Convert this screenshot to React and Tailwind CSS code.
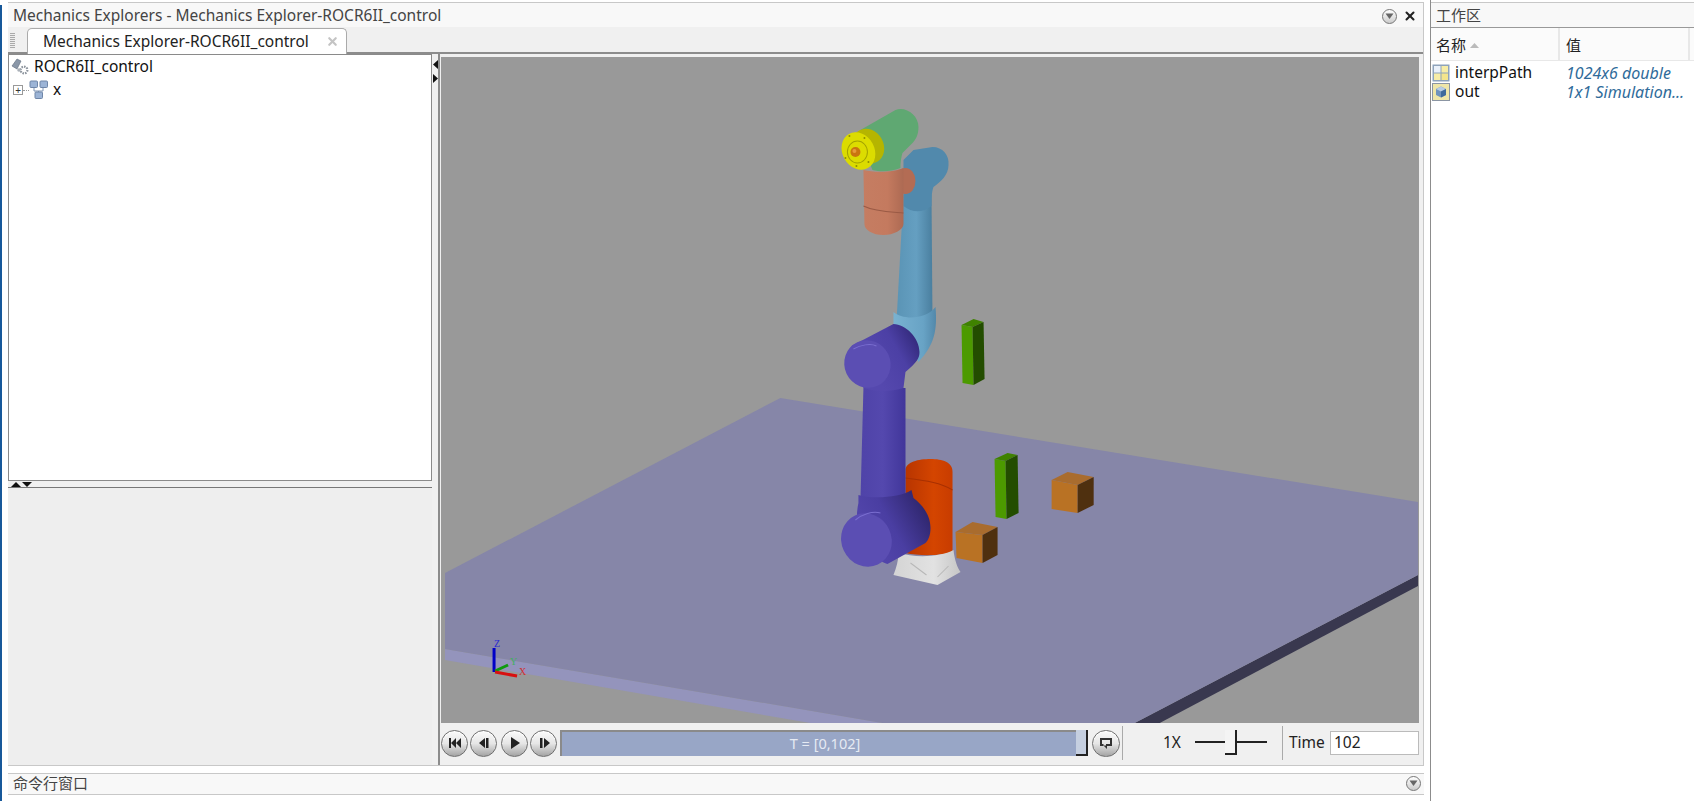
import React from 'react';
import { X } from 'lucide-react';

const uiFont = "font-['Noto_Sans','Noto_Sans_CJK_SC',sans-serif]";

// little round drop-down button used in the panel title bars
const PanelMenu = () => (
    <span className="flex h-[15px] w-[15px] items-center justify-center rounded-full border border-[#777] bg-linear-to-b from-white to-[#ccc]">
        <svg width="9" height="7" viewBox="0 0 9 7"><path d="M0.5 0.5h8L4.5 6z" fill="#666" /></svg>
    </span>
);

const RoundButton = ({ children, className = '' }) => (
    <button className={`flex h-[27px] shrink-0 items-center justify-center rounded-full border border-[#6f6f6f] bg-linear-to-b from-[#fbfbfb] via-[#e6e6e6] to-[#a4a4a4] shadow-[inset_0_1px_1px_white] ${className}`}>
        {children}
    </button>
);

const Poly = ({ d, fill }) => <polygon points={d} fill={fill} />;

const Box = ({ front, top, right, colors }) => (
    <g>
        <Poly d={front} fill={colors[0]} />
        <Poly d={top} fill={colors[1]} />
        <Poly d={right} fill={colors[2]} />
    </g>
);

const greenBar = ['#4c9a00', '#3f8200', '#234d00'];
const orangeBox = ['#b97224', '#a96c2e', '#4f300f'];

const Scene = () => (
    <svg className="block h-full w-full" viewBox="441 57 977 666" preserveAspectRatio="none">
        <defs>
            <linearGradient id="purpleTube" x1="0" x2="1" y1="0" y2="0">
                <stop offset="0" stopColor="#4f43a8" />
                <stop offset="0.5" stopColor="#5448ae" />
                <stop offset="1" stopColor="#41369a" />
            </linearGradient>
            <linearGradient id="purpleBody" gradientUnits="userSpaceOnUse" x1="860" x2="925" y1="545" y2="510">
                <stop offset="0" stopColor="#5548ae" />
                <stop offset="0.5" stopColor="#4a3ea2" />
                <stop offset="1" stopColor="#30276f" />
            </linearGradient>
            <linearGradient id="purpleUpper" gradientUnits="userSpaceOnUse" x1="870" x2="915" y1="365" y2="340">
                <stop offset="0" stopColor="#5548ae" />
                <stop offset="0.6" stopColor="#4c40a5" />
                <stop offset="1" stopColor="#362c80" />
            </linearGradient>
            <linearGradient id="blueTube" x1="0" x2="1" y1="0" y2="0">
                <stop offset="0" stopColor="#5a94b5" />
                <stop offset="0.55" stopColor="#659fc1" />
                <stop offset="1" stopColor="#4a7f9f" />
            </linearGradient>
            <linearGradient id="orangeBase" x1="0" x2="1" y1="0" y2="0">
                <stop offset="0" stopColor="#b83500" />
                <stop offset="0.6" stopColor="#d44500" />
                <stop offset="1" stopColor="#c83c00" />
            </linearGradient>
            <linearGradient id="salmon" x1="0" x2="1" y1="0" y2="0">
                <stop offset="0" stopColor="#c57d62" />
                <stop offset="0.6" stopColor="#c47a5f" />
                <stop offset="1" stopColor="#ad6a53" />
            </linearGradient>
            <linearGradient id="elbow" x1="0" x2="1" y1="0" y2="0">
                <stop offset="0" stopColor="#79b2d1" />
                <stop offset="0.7" stopColor="#68a3c5" />
                <stop offset="1" stopColor="#5288aa" />
            </linearGradient>
            <linearGradient id="whiteBase" x1="0" x2="1" y1="0" y2="0">
                <stop offset="0" stopColor="#d4d4d4" />
                <stop offset="0.6" stopColor="#e2e2e2" />
                <stop offset="1" stopColor="#c6c6c6" />
            </linearGradient>
        </defs>

        {/* floor plate */}
        <Poly d="445,649 882,723 810,723 445,660" fill="#9494bc" />
        <Poly d="1417,575 1417,586 1159,723 1134,723" fill="#39384f" />
        <Poly d="445,573 780,398 1417,502 1417,575 1134,723 882,723 445,649" fill="#8686a8" />

        {/* obstacles */}
        <Box front="961,325 972,327 973,385 962,383" top="961,325 973,319 983,322 972,327" right="972,327 983,322 984,379 973,385" colors={greenBar} />
        <Box front="994,459 1005,461 1006,519 995,517" top="994,459 1007,453 1017,455 1005,461" right="1005,461 1017,455 1018,513 1006,519" colors={greenBar} />
        <Box front="1051,480 1077,485 1077,513 1051,509" top="1051,480 1067,472 1093,477 1077,485" right="1077,485 1093,477 1093,505 1077,513" colors={orangeBox} />

        {/* base */}
        <path d="M905 553V470C905 462 918 459 930 459C942 459 952 462 952 472V552C940 556 918 556 905 553Z" fill="url(#orangeBase)" />
        <path d="M905 478C920 480 940 482 952 490" stroke="#a83000" fill="none" />
        <path d="M898 553C915 558 940 557 953 550C954 560 957 568 960 572L937 585L893 575C896 568 898 560 898 553Z" fill="url(#whiteBase)" />
        <path d="M910 563L926 575M948 566L937 577" stroke="#b8b8b8" fill="none" />
        <Box front="955,532 982,535 982,563 956,558" top="955,532 972,522 997,527 982,535" right="982,535 997,527 997,555 982,563" colors={orangeBox} />

        {/* lower purple tube and joint */}
        <path d="M863 388H905V502H860Z" fill="url(#purpleTube)" />
        <path d="M858 495C870 499 900 498 911 490L913 498C922 505 930 515 930 528C930 535 928 540 925 543L887 564C875 560 850 540 858 503Z" fill="url(#purpleBody)" />
        <ellipse cx="866" cy="540" rx="25" ry="27" transform="rotate(-25 866 540)" fill="#5b4eb3" />
        <path d="M855 520C862 514 872 511 880 513" stroke="#7a6ed0" fill="none" />

        {/* blue tube */}
        <path d="M903 195H931L932 322H896Z" fill="url(#blueTube)" />
        <path d="M893 312C902 320 925 320 935 307C937 330 934 345 918 362L903 335L893 325Z" fill="url(#elbow)" />

        {/* upper purple joint */}
        <path d="M851 346L893 324C905 324 919 338 919 352C919 358 917 362 905 372L903 388C890 392 875 392 863 388Z" fill="url(#purpleUpper)" />
        <ellipse cx="867" cy="364" rx="23" ry="24" transform="rotate(-25 867 364)" fill="#5b4eb3" />
        <path d="M853 349C860 345 870 343 876 346" stroke="#7a6ed0" fill="none" />

        {/* blue elbow */}
        <path d="M903 160L913 150L932 147C942 147 949 155 948 165C948 175 940 182 933 187C931 192 931 200 931 206C922 213 912 213 903 206Z" fill="#5189ac" />

        {/* salmon link */}
        <ellipse cx="905" cy="181" rx="10" ry="13" fill="#b36c54" />
        <path d="M863 170C875 173 895 172 903 168V224C903 230 893 235 883 235C872 235 864 230 864 224Z" fill="url(#salmon)" />
        <path d="M863 206C875 212 892 212 903 213" stroke="#9a5a45" fill="none" />

        {/* green wrist and yellow flange */}
        <path d="M860 130L895 110C905 106 918 115 918 127C918 134 916 139 912 143L902 153C900 160 900 165 900 168C890 172 880 172 872 170L868 160Z" fill="#5fa872" />
        <path d="M858 151L868 146" stroke="#b5b500" strokeWidth="35" />
        <ellipse cx="868" cy="146" rx="15" ry="18" transform="rotate(-29 868 146)" fill="#b5b500" />
        <ellipse cx="858" cy="151" rx="16" ry="19.5" transform="rotate(-29 858 151)" fill="#dcdc00" />
        <ellipse cx="857" cy="152" rx="10" ry="11" fill="none" stroke="#a3a300" />
        <g fill="#8e8e00">
            <circle cx="849" cy="136" r="1" />
            <circle cx="864" cy="138" r="1" />
            <circle cx="845" cy="158" r="1" />
            <circle cx="868" cy="162" r="1" />
            <circle cx="856" cy="166" r="1" />
        </g>
        <circle cx="855" cy="152" r="5" fill="#c9750f" />
        <circle cx="854" cy="151" r="2" fill="#e79a3a" />

        {/* axes triad */}
        <path d="M494 672V648" stroke="#0000c8" strokeWidth="3" />
        <path d="M495 671L508 665" stroke="#0f9a0f" strokeWidth="3" />
        <path d="M495 672L517 676" stroke="#d81010" strokeWidth="3" />
        <text x="494" y="647" fontSize="10" fill="#2a2ad0" fontFamily="Liberation Serif, serif">Z</text>
        <text x="510" y="665" fontSize="10" fill="#40b060" fontFamily="Liberation Serif, serif">Y</text>
        <text x="519" y="675" fontSize="10" fill="#d03030" fontFamily="Liberation Serif, serif">X</text>
    </svg>
);

const TreeIcons = {
    model: (
        <svg width="22" height="18" viewBox="0 0 22 18">
            <path d="M2 8L7 1L11 3L7 11Z" fill="#8a97a8" stroke="#5d6a7a" strokeWidth="0.6" />
            <circle cx="14" cy="12" r="3.4" fill="none" stroke="#8f969f" strokeWidth="2.2" strokeDasharray="1.6 1" />
            <circle cx="9" cy="12" r="1.8" fill="#aab0b8" />
        </svg>
    ),
    blocks: (
        <svg width="20" height="20" viewBox="0 0 20 20">
            <path d="M5 7V11H14V7M9.5 11V13" stroke="#7d93b3" fill="none" />
            <rect x="1" y="1" width="7.5" height="6.5" rx="1" fill="#9cb4d6" stroke="#6f86a8" />
            <rect x="11" y="1" width="7.5" height="6.5" rx="1" fill="#9cb4d6" stroke="#6f86a8" />
            <rect x="6" y="12" width="7.5" height="6.5" rx="1" fill="#9cb4d6" stroke="#6f86a8" />
        </svg>
    ),
};

const VarIconGrid = () => (
    <svg width="18" height="18" viewBox="0 0 18 18" className="shrink-0">
        <rect x="0.5" y="0.5" width="17" height="17" fill="#8ea3bb" />
        <rect x="2" y="2" width="6.5" height="6.5" fill="#eaf1fa" />
        <rect x="9.5" y="2" width="6.5" height="6.5" fill="#f7eda6" />
        <rect x="2" y="9.5" width="6.5" height="6.5" fill="#f7eda6" />
        <rect x="9.5" y="9.5" width="6.5" height="6.5" fill="#f4e58c" />
    </svg>
);

const VarIconCube = () => (
    <svg width="18" height="18" viewBox="0 0 18 18" className="shrink-0">
        <rect x="0.5" y="0.5" width="17" height="17" fill="#efe6a8" stroke="#8b95a3" />
        <path d="M9 3.5L14 6V12L9 14.5L4 12V6Z" fill="#6f93bd" />
        <path d="M9 3.5L14 6L9 8.5L4 6Z" fill="#b9cde3" />
        <path d="M9 8.5L14 6V12L9 14.5Z" fill="#3f6a9c" />
    </svg>
);

const Glyph = ({ d }) => (
    <svg width="14" height="12" viewBox="0 0 14 12"><path d={d} fill="#222" /></svg>
);

const WorkspaceRow = ({ icon, name, value }) => (
    <div className="flex h-[19px] items-center leading-none">
        <div className="flex w-[135px] items-center gap-[5px] pl-[1px] text-[15.5px] text-[#111]">
            {icon}
            <span>{name}</span>
        </div>
        <span className="text-[16px] text-[#2f6b9a] italic">{value}</span>
    </div>
);

export default function App() {
    return (
        <div className={`flex h-screen w-screen overflow-hidden bg-white ${uiFont}`}>
            <div className="mt-[5px] w-[2px] shrink-0 bg-[#17589a]" />

            {/* main column */}
            <div className="ml-[6px] flex w-[1416px] shrink-0 flex-col pt-[2px]">
                <div className="flex flex-1 flex-col border-t border-r border-b border-[#c8c8c8] bg-[#f0f0f0]">
                    {/* title bar */}
                    <div className="flex h-[24px] items-center justify-between bg-[#f8f8f8] pt-[2px] pr-[6px] pl-[5px] text-[15.5px] text-[#444]">
                        <span>Mechanics Explorers - Mechanics Explorer-ROCR6II_control</span>
                        <div className="flex items-center gap-[6px]">
                            <PanelMenu />
                            <X size={14} strokeWidth={3.5} color="#222" />
                        </div>
                    </div>

                    {/* tab strip */}
                    <div className="flex h-[27px] items-end border-b-[2px] border-[#8c8c8c] pl-[2px]">
                        <div className="mr-[12px] mb-[4px] h-[15px] w-[5px] bg-[repeating-linear-gradient(0deg,#aaa_0,#aaa_1px,#eee_1px,#eee_2px)]" />
                        <div className="-mb-[2px] flex h-[26px] w-[320px] items-center justify-between rounded-t-[5px] border border-b-0 border-[#aaa] bg-white pr-[7px] pl-[15px] text-[15.5px] text-[#222]">
                            <span>Mechanics Explorer-ROCR6II_control</span>
                            <X size={13} strokeWidth={4} color="#c4c4c4" />
                        </div>
                    </div>

                    {/* body */}
                    <div className="flex flex-1">
                        <div className="flex w-[424px] shrink-0 flex-col">
                            <div className="h-[427px] border border-[#8a8a8a] bg-white text-[15.5px] text-[#111]">
                                <div className="flex h-[24px] items-center gap-[2px] pl-[1px]">
                                    {TreeIcons.model}
                                    <span>ROCR6II_control</span>
                                </div>
                                <div className="flex h-[22px] items-center pl-[4px]">
                                    <span className="flex h-[10px] w-[10px] items-center justify-center border border-[#999] text-[10px] leading-none text-[#333]">+</span>
                                    <span className="w-[6px] border-t border-dotted border-[#999]" />
                                    {TreeIcons.blocks}
                                    <span className="ml-[4px]">x</span>
                                </div>
                            </div>
                            <div className="flex h-[6px] items-center gap-[1px] pl-[3px]">
                                <svg width="10" height="5" viewBox="0 0 10 5"><path d="M5 0L10 5H0Z" fill="#111" /></svg>
                                <svg width="10" height="5" viewBox="0 0 10 5"><path d="M0 0H10L5 5Z" fill="#111" /></svg>
                            </div>
                            <div className="flex-1 border-t border-[#777] bg-[#eeeeee]" />
                        </div>

                        {/* splitter */}
                        <div className="flex w-[6px] shrink-0 flex-col items-center gap-[5px] pt-[6px]">
                            <svg width="5" height="9" viewBox="0 0 5 9"><path d="M5 0V9L0 4.5Z" fill="#111" /></svg>
                            <svg width="5" height="9" viewBox="0 0 5 9"><path d="M0 0V9L5 4.5Z" fill="#111" /></svg>
                        </div>

                        {/* viewer */}
                        <div className="flex flex-1 flex-col border-l-[2px] border-[#8c8c8c] pr-[5px] pl-[1px]">
                            <div className="mt-[3px] h-[666px] bg-[#999999]">
                                <Scene />
                            </div>
                            <div className="flex h-[38px] items-center pt-[2px] text-[15.5px]">
                                <RoundButton className="w-[27px]"><Glyph d="M1 1h2v10H1zM8 1v10L3 6zM13 1v10L8 6z" /></RoundButton>
                                <RoundButton className="ml-[2px] w-[27px]"><Glyph d="M8 1v10L2 6zM9 1h2.5v10H9z" /></RoundButton>
                                <RoundButton className="ml-[4px] w-[27px]"><Glyph d="M3 0v12l9-6z" /></RoundButton>
                                <RoundButton className="ml-[2px] w-[27px]"><Glyph d="M3 1h2.5v10H3zM7 1v10l6-5z" /></RoundButton>

                                <div className="relative ml-[3px] flex h-[26px] w-[528px] items-center justify-center border-t-[2px] border-l-[2px] border-[#8a8a8a] bg-[#98a6c6] text-[14.5px] text-[#e6eaf3]">
                                    T = [0,102]
                                    <div className="absolute top-[-2px] right-0 h-[26px] w-[12px] border-r-[2px] border-b-[2px] border-[#222] bg-[#c5cfe0]" />
                                </div>
                                <RoundButton className="ml-[4px] w-[28px]">
                                    <svg width="14" height="13" viewBox="0 0 14 13"><path d="M1 1h12v8H8v3L4.5 8.5H7V7h4V3H3v4h1.5v2H1z" fill="#333" /></svg>
                                </RoundButton>

                                <div className="ml-[2px] flex h-[34px] w-[161px] items-center border-x border-[#aaa]">
                                    <span className="ml-[40px] w-[19px] text-[#222]">1X</span>
                                    <div className="relative ml-[13px] h-[26px] w-[72px]">
                                        <div className="absolute top-[11px] h-[2px] w-full bg-[#222]" />
                                        <div className="absolute left-[30px] h-[25px] w-[12px] border-r-[2px] border-b-[2px] border-[#222] bg-[#f4f4f4]" />
                                    </div>
                                </div>
                                <span className="ml-[6px] w-[35px] text-[#222]">Time</span>
                                <div className="ml-[6px] flex h-[24px] w-[89px] items-center border border-[#bbb] bg-white pl-[3px] text-[#222]">102</div>
                            </div>
                        </div>
                    </div>
                </div>

                {/* command window */}
                <div className="mt-[7px] h-[22px] shrink-0 border-t border-b border-[#c8c8c8] bg-[#f8f8f8]">
                    <div className="flex h-full items-center justify-between pr-[3px] pb-[1px] pl-[5px] text-[15px] text-[#444]">
                        <span>命令行窗口</span>
                        <PanelMenu />
                    </div>
                </div>
                <div className="h-[6px] shrink-0 bg-white" />
            </div>

            {/* workspace */}
            <div className="ml-[6px] flex flex-1 flex-col border-l border-[#8c8c8c] pt-[2px]">
                <div className="flex h-[26px] items-center border-t border-b border-t-[#c8c8c8] border-b-[#999] bg-[#f8f8f8] pt-[1px] pl-[5px] text-[15px] text-[#444]">工作区</div>
                <div className="flex h-[33px] items-center border-b border-[#e8e8e8] bg-[#fbfbfb] text-[15px] text-[#222]">
                    <div className="flex h-full w-[129px] items-center gap-[4px] border-r-[2px] border-[#e8e8e8] pt-[3px] pl-[5px]">
                        <span>名称</span>
                        <svg width="9" height="5" viewBox="0 0 9 5"><path d="M4.5 0L9 5H0Z" fill="#bbb" /></svg>
                    </div>
                    <div className="flex h-full w-[130px] items-center border-r-[2px] border-[#e8e8e8] pt-[3px] pl-[6px]">值</div>
                </div>
                <div className="pt-[2px]">
                    <WorkspaceRow icon={<VarIconGrid />} name="interpPath" value="1024x6 double" />
                    <WorkspaceRow icon={<VarIconCube />} name="out" value="1x1 Simulation..." />
                </div>
            </div>
        </div>
    );
}
